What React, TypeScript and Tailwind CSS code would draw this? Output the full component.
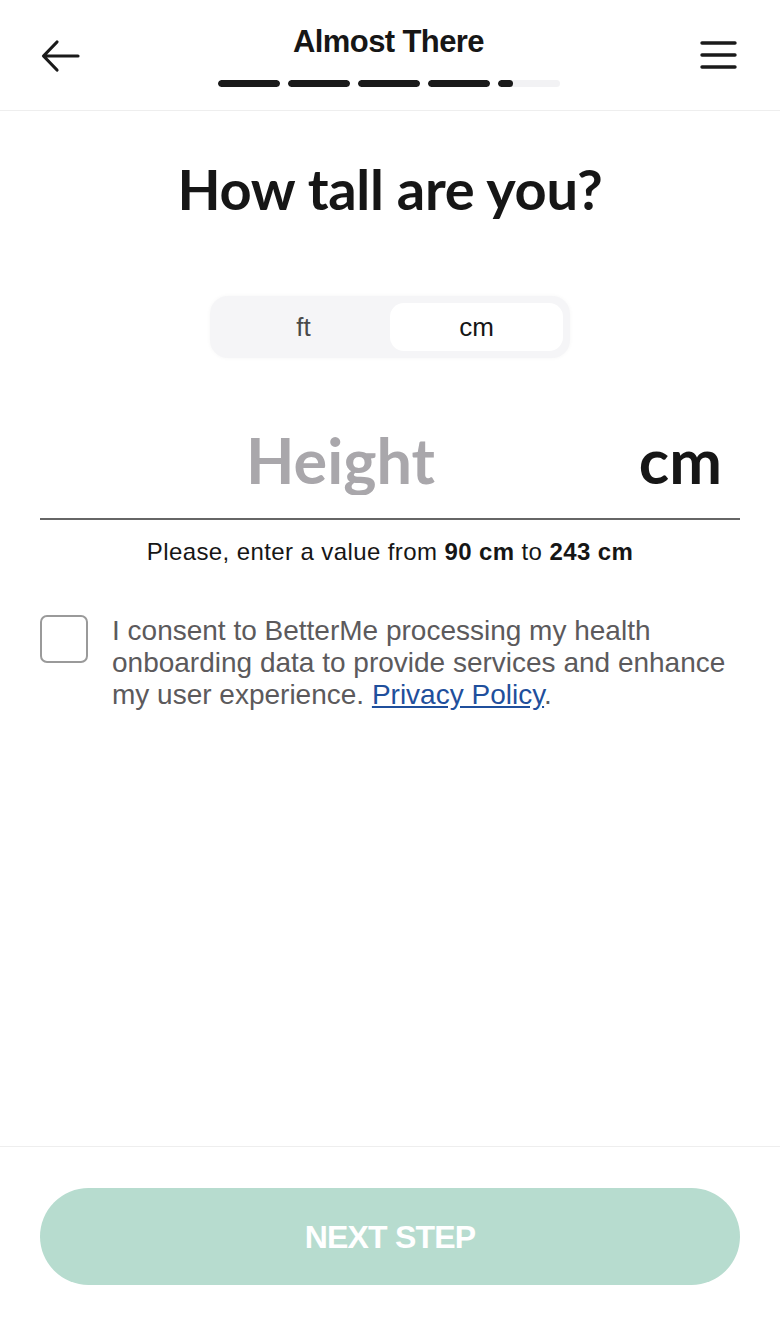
import React, { useState } from 'react';

const display = "font-['Lato','Inter',sans-serif]";
const helv = "font-['Liberation_Sans','Arial',sans-serif]";

function ProgressSegments() {
  const segments = [100, 100, 100, 100, 25];
  return (
    <div className="flex gap-2">
      {segments.map((fill, i) => (
        <div key={i} className="h-[7px] w-[62px] overflow-hidden rounded-full bg-[#f2f2f4]">
          <div className="h-full rounded-full bg-[#1a1a1a]" style={{ width: `${fill}%` }} />
        </div>
      ))}
    </div>
  );
}

export default function App() {
  const [unit, setUnit] = useState<'ft' | 'cm'>('cm');
  const [agreed, setAgreed] = useState(false);

  return (
    <div className="flex min-h-[1326px] flex-col bg-white text-[#161616]">
      <header className="flex h-[111px] items-start justify-between border-b border-[#eeeeee] px-10">
        <button className="mt-[36px] flex h-10 w-10 items-center justify-start">
          <svg width="40" height="34" viewBox="0 0 40 34" fill="none" stroke="#1a1a1a" strokeWidth="3.2" strokeLinecap="round" strokeLinejoin="round">
            <path d="M38 17H4M17 3L3.5 17L17 31" />
          </svg>
        </button>
        <div className="flex flex-col items-center gap-[22px] pt-[26px]">
          <h1 className={`${helv} text-[31px] leading-8 font-bold tracking-[-0.6px]`}>Almost There</h1>
          <ProgressSegments />
        </div>
        <button className="mt-[35px] mr-[3px] flex h-10 w-10 items-center justify-end">
          <svg width="37" height="30" viewBox="0 0 37 30" fill="none" stroke="#1a1a1a" strokeWidth="3.4" strokeLinecap="round">
            <path d="M2 3H35M2 15H35M2 27H35" />
          </svg>
        </button>
      </header>

      <main className="flex flex-1 flex-col px-10">
        <h2 className={`${display} mt-[46px] text-center text-[56px] leading-[64px] font-bold tracking-[-0.3px]`}>How tall are you?</h2>

        <div className="mt-[75px] flex justify-center">
          <div className="flex w-[360px] rounded-[18px] bg-[#f5f5f7] p-[7px] shadow-[0_0_4px_rgba(0,0,0,0.04)]">
            {(['ft', 'cm'] as const).map((u) => (
              <button
                key={u}
                onClick={() => setUnit(u)}
                className={`${helv} h-12 flex-1 rounded-[14px] text-[26px] ${unit === u ? 'bg-white text-[#161616]' : 'text-[#4a4a4a]'}`}
              >
                {u}
              </button>
            ))}
          </div>
        </div>

        <div className="mt-[67px] flex items-end border-b-2 border-[#666666] pb-[23px]">
          <input
            placeholder="Height"
            className={`${display} min-w-0 flex-1 pl-[206px] text-left text-[63px] leading-[70px] font-bold outline-none placeholder:text-[#a9a7ab]`}
          />
          <span className={`${display} pr-[18px] text-[63px] leading-[70px] font-bold`}>{unit}</span>
        </div>

        <p className={`${helv} mt-[18px] text-center text-[24px] leading-7 tracking-[0.4px]`}>
          Please, enter a value from <b>90 cm</b> to <b>243 cm</b>
        </p>

        <label className="mt-[49px] flex gap-6">
          <button
            onClick={() => setAgreed(!agreed)}
            className="h-[48px] w-[48px] shrink-0 rounded-[7px] border-2 border-[#9a9a9a] bg-white"
          />
          <span className={`${helv} text-[28px] leading-8 text-[#5c5a5c]`}>
            I consent to BetterMe processing my health onboarding data to provide services and enhance my user experience.{' '}
            <a href="#" className="text-[#1f4f9c] underline">Privacy Policy</a>.
          </span>
        </label>
      </main>

      <footer className="border-t border-[#eeeeee] px-10 pt-[41px] pb-[41px]">
        <button className={`${helv} h-[97px] w-full rounded-full bg-[#b7dccf] text-[32px] font-bold tracking-[-0.8px] text-white`}>
          NEXT STEP
        </button>
      </footer>
    </div>
  );
}
